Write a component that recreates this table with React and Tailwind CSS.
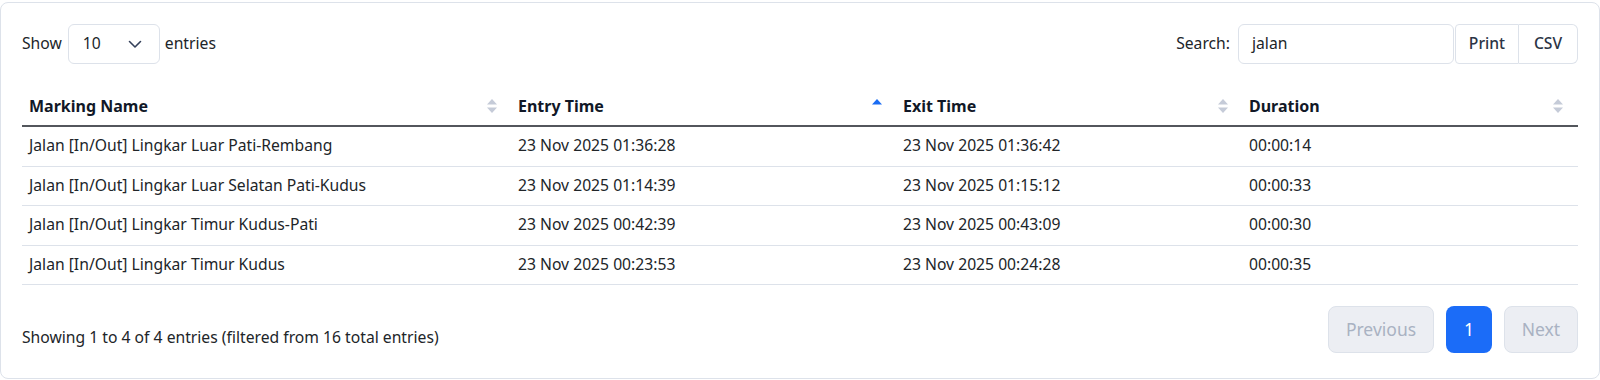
import React from "react";

const rows = [
  ["Jalan [In/Out] Lingkar Luar Pati-Rembang", "23 Nov 2025 01:36:28", "23 Nov 2025 01:36:42", "00:00:14"],
  ["Jalan [In/Out] Lingkar Luar Selatan Pati-Kudus", "23 Nov 2025 01:14:39", "23 Nov 2025 01:15:12", "00:00:33"],
  ["Jalan [In/Out] Lingkar Timur Kudus-Pati", "23 Nov 2025 00:42:39", "23 Nov 2025 00:43:09", "00:00:30"],
  ["Jalan [In/Out] Lingkar Timur Kudus", "23 Nov 2025 00:23:53", "23 Nov 2025 00:24:28", "00:00:35"],
];

function SortBoth() {
  return (
    <svg width="12" height="18" viewBox="0 0 12 18" className="shrink-0">
      <path d="M6 2 L11 7.5 H1 Z" fill="#c5cbd8" />
      <path d="M6 16 L11 10.5 H1 Z" fill="#c5cbd8" />
    </svg>
  );
}

function SortAsc() {
  return (
    <svg width="12" height="18" viewBox="0 0 12 18" className="shrink-0">
      <path d="M6 2 L11 7.5 H1 Z" fill="#1a6cf3" />
    </svg>
  );
}

const cols = [
  { label: "Marking Name", w: "w-[489px]", icon: <SortBoth /> },
  { label: "Entry Time", w: "w-[385px]", icon: <SortAsc /> },
  { label: "Exit Time", w: "w-[346px]", icon: <SortBoth /> },
  { label: "Duration", w: "w-[335px]", icon: <SortBoth /> },
];

export default function App() {
  return (
    <div className="w-[1600px] h-[380px] bg-white pt-[2px]" style={{ fontFamily: '"Noto Sans", "Open Sans", sans-serif' }}>
      <div className="h-[377px] border border-[#dde2ea] rounded-[8px] px-[21px] pt-[21px] text-[15.7px] text-[#212529]">
        <div className="flex items-center justify-between h-[40px]">
          <div className="flex items-center">
            <span>Show</span>
            <div className="ml-[6px] mr-[5px] w-[92px] h-[40px] border border-[#dde2ea] rounded-[6px] flex items-center pl-[14px] pr-[16px] justify-between">
              <span>10</span>
              <svg width="16" height="16" viewBox="0 0 16 16" fill="none">
                <path d="M2.5 5.5 L8 11 L13.5 5.5" stroke="#34405a" strokeWidth="1.6" strokeLinecap="round" strokeLinejoin="round" />
              </svg>
            </div>
            <span>entries</span>
          </div>
          <div className="flex items-center">
            <span className="mr-[8px]">Search:</span>
            <div className="w-[216px] h-[40px] border border-[#dde2ea] rounded-[6px] flex items-center px-[13px]">jalan</div>
            <div className="flex h-[40px] ml-[1px]">
              <button className="h-[40px] w-[64px] border border-[#dde2ea] rounded-l-[4px] font-medium text-[#2b3445]">Print</button>
              <button className="h-[40px] w-[59px] border border-l-0 border-[#dde2ea] rounded-r-[6px] font-medium text-[#2b3445]">CSV</button>
            </div>
          </div>
        </div>

        <div className="mt-[23px]">
          <div className="flex h-[40px] border-b-2 border-[#53565c] font-bold text-[16px] text-[#111827]">
            {cols.map((c) => (
              <div key={c.label} className={`${c.w} flex items-center justify-between pl-[7px] pr-[13px]`}>
                <span>{c.label}</span>
                {c.icon}
              </div>
            ))}
          </div>
          {rows.map((r, i) => (
            <div key={i} className="flex h-[39.5px] border-b border-[#dde2ea]">
              {r.map((cell, j) => (
                <div key={j} className={`${cols[j].w} flex items-center pl-[7px]`}>
                  {cell}
                </div>
              ))}
            </div>
          ))}
        </div>

        <div className="flex justify-between mt-[21px]">
          <div className="pt-[20px]">Showing 1 to 4 of 4 entries (filtered from 16 total entries)</div>
          <div className="flex gap-[12px] text-[17.5px]">
            <button className="h-[47px] w-[106px] rounded-[8px] border border-[#dde2ea] bg-[#eceef3] text-[#a9b2c2]">Previous</button>
            <button className="h-[47px] w-[46px] rounded-[8px] bg-[#1b6cf8] text-white">1</button>
            <button className="h-[47px] w-[74px] rounded-[8px] border border-[#dde2ea] bg-[#eceef3] text-[#a9b2c2]">Next</button>
          </div>
        </div>
      </div>
    </div>
  );
}
